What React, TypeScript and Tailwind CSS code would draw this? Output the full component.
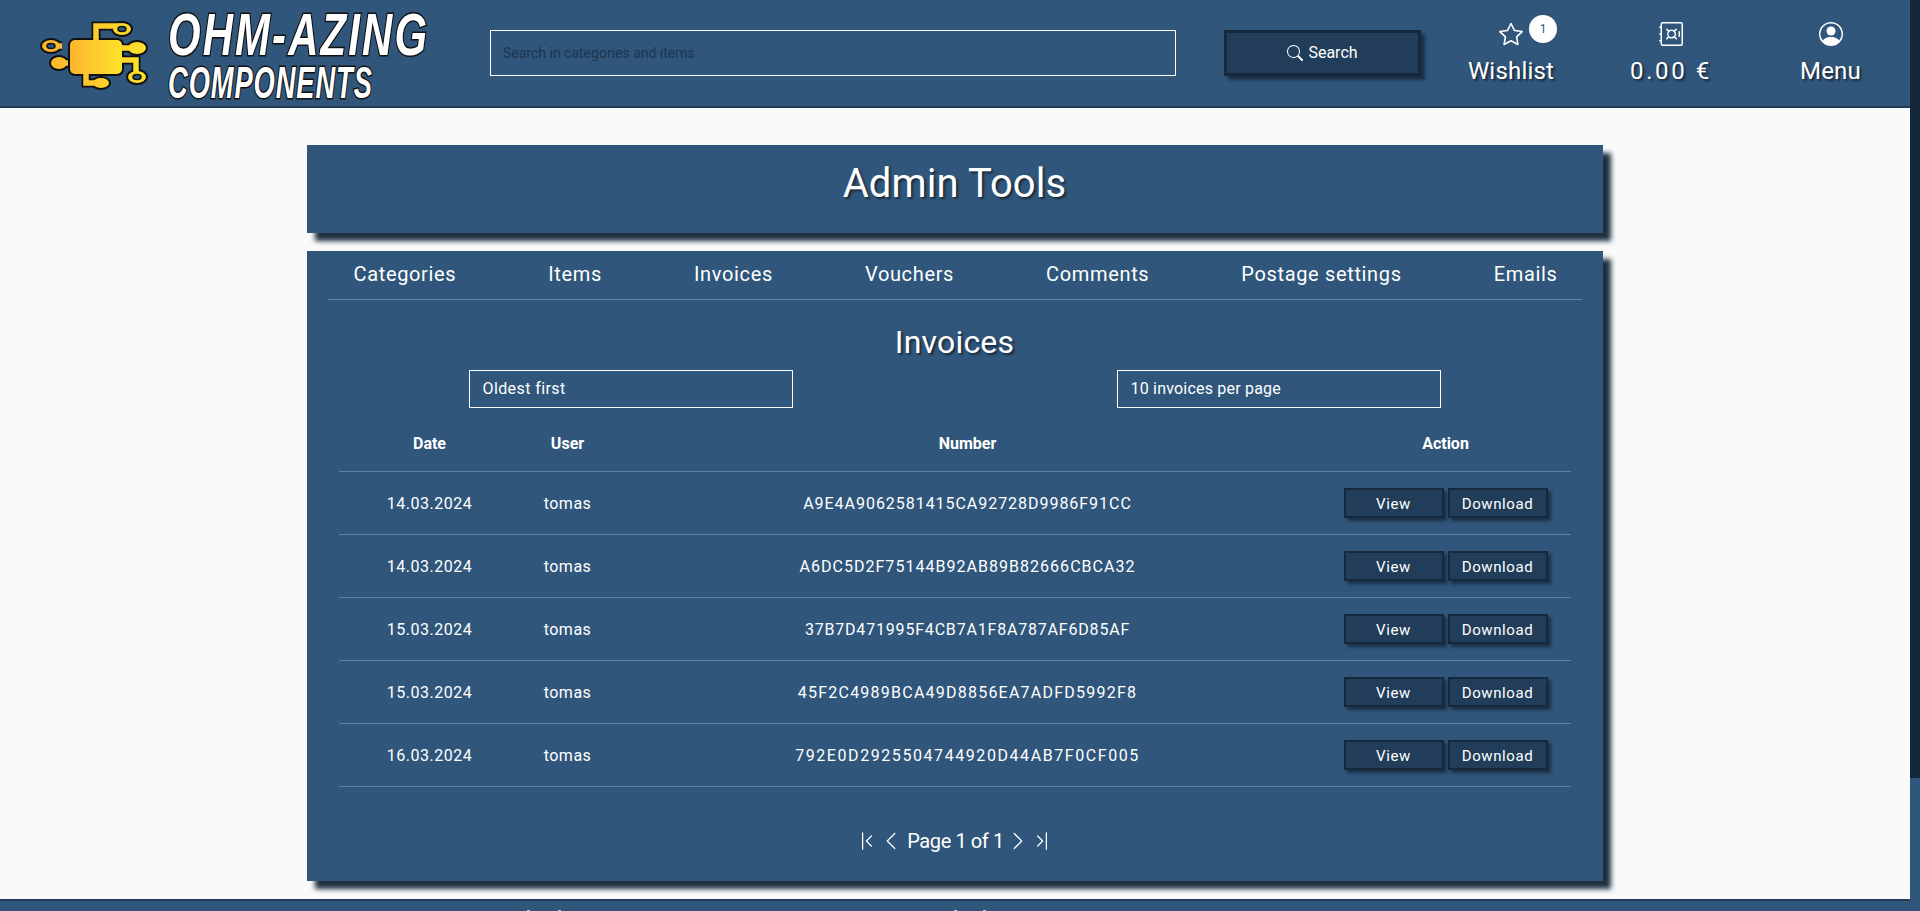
import React from "react";
import { BsSearch, BsStar, BsSafe, BsPersonCircle, BsChevronBarLeft, BsChevronLeft, BsChevronRight, BsChevronBarRight } from "react-icons/bs";

const ts = "[text-shadow:2px_2px_2px_#1b2b3c]";

function Chip() {
  const traces = "M26 26H12 M32 43H22 M60 20V6H84 M50 54V63H64 M80 28H98 M80 40H100V56";
  return (
    <svg width="120" height="80" viewBox="0 0 120 80" className="shrink-0 mt-[14px]">
      <defs>
        <linearGradient id="g" x1="0" x2="1" y1="0" y2="0">
          <stop offset="0" stopColor="#fdb52e" />
          <stop offset="1" stopColor="#fde22b" />
        </linearGradient>
        <linearGradient id="g2" gradientUnits="userSpaceOnUse" x1="10" x2="110" y1="0" y2="0">
          <stop offset="0" stopColor="#fdb52e" />
          <stop offset="1" stopColor="#fde22b" />
        </linearGradient>
      </defs>
      <g fill="#111" stroke="#111">
        <path d={traces} fill="none" strokeWidth="9" />
        <rect x="33" y="19" width="54" height="36" rx="6" strokeWidth="2" />
        <ellipse cx="15" cy="26" rx="11" ry="8" strokeWidth="0" />
        <ellipse cx="23" cy="43" rx="10" ry="8" strokeWidth="0" />
        <ellipse cx="86" cy="9" rx="11" ry="8" strokeWidth="0" />
        <ellipse cx="101" cy="28" rx="11" ry="8" strokeWidth="0" />
        <ellipse cx="101" cy="57" rx="11" ry="8" strokeWidth="0" />
        <ellipse cx="65" cy="63" rx="10" ry="7" strokeWidth="0" />
      </g>
      <g fill="url(#g2)" stroke="url(#g2)">
        <path d={traces} fill="none" strokeWidth="5.5" />
        <rect x="34" y="20" width="52" height="34" rx="5" strokeWidth="0" fill="url(#g)" />
        <ellipse cx="15" cy="26" rx="9" ry="6" strokeWidth="0" />
        <ellipse cx="23" cy="43" rx="8" ry="6" strokeWidth="0" />
        <ellipse cx="86" cy="9" rx="9" ry="6" strokeWidth="0" />
        <ellipse cx="101" cy="28" rx="9" ry="6" strokeWidth="0" />
        <ellipse cx="101" cy="57" rx="9" ry="6" strokeWidth="0" />
        <ellipse cx="65" cy="63" rx="8" ry="5" strokeWidth="0" />
      </g>
      <g fill="#30567b" stroke="#111" strokeWidth="1.5">
        <ellipse cx="15" cy="26" rx="4" ry="2.5" />
        <ellipse cx="86" cy="9" rx="4" ry="2.5" />
        <ellipse cx="101" cy="57" rx="4" ry="2.5" />
      </g>
    </svg>
  );
}

function Logo() {
  const cls = "block origin-left font-['Liberation_Sans',sans-serif] font-bold italic text-white [paint-order:stroke_fill] [-webkit-text-stroke:3px_#111] whitespace-nowrap";
  return (
    <div className="w-[490px] shrink-0 flex items-center pl-[36px]">
      <Chip />
      <div className="w-[270px] flex flex-col ml-[12px] overflow-visible pt-[3px]">
        <span className={`${cls} text-[59px] leading-[52px] tracking-[3px] scale-x-[0.71]`}>OHM-AZING</span>
        <span className={`${cls} text-[44px] leading-[34px] tracking-[1.5px] scale-x-[0.62] mt-[5px]`}>COMPONENTS</span>
      </div>
    </div>
  );
}

function HeaderItem({ icon, label, badge, w = "w-[160px]", track = "tracking-[0.2px]" }: { icon: React.ReactNode; label: string; badge?: boolean; w?: string; track?: string }) {
  return (
    <div className={`${w} shrink-0 flex flex-col items-center relative text-white`}>
      <div className={`h-[24px] flex items-center ${ts}`}>{icon}</div>
      <div className={`text-[24px] leading-[28px] mt-[11px] ${track} ${ts}`}>{label}</div>
      {badge && (
        <span className="absolute left-[98px] top-[-7px] w-[28px] h-[28px] rounded-full bg-white text-[#30567b] text-[12px] flex items-center justify-center">1</span>
      )}
    </div>
  );
}

function Btn({ children }: { children: React.ReactNode }) {
  return (
    <button className="w-[100px] h-[30px] bg-[#213d59] border-[2px] border-[#16283c] text-white text-[15px] leading-none tracking-[0.6px] pt-[2px] flex items-center justify-center shadow-[3px_3px_3px_#1c3046]">
      {children}
    </button>
  );
}

const rows = [
  ["14.03.2024", "A9E4A9062581415CA92728D9986F91CC", "tracking-[0.96px]"],
  ["14.03.2024", "A6DC5D2F75144B92AB89B82666CBCA32", "tracking-[1.03px]"],
  ["15.03.2024", "37B7D471995F4CB7A1F8A787AF6D85AF", "tracking-[0.81px]"],
  ["15.03.2024", "45F2C4989BCA49D8856EA7ADFD5992F8", "tracking-[1.23px]"],
  ["16.03.2024", "792E0D2925504744920D44AB7F0CF005", "tracking-[1.57px]"],
];

const grid = "grid grid-cols-[182px_94px_706px_250px] items-center text-center";
const navItems = ["Categories", "Items", "Invoices", "Vouchers", "Comments", "Postage settings", "Emails"];

export default function App() {
  return (
    <div className="flex h-[911px] w-[1920px] overflow-hidden font-['Roboto',sans-serif] text-white">
      <div className="w-[1910px] shrink-0 flex flex-col">
        <header className="h-[108px] shrink-0 bg-[#30567b] border-b-2 border-[#1f3a55] flex items-center">
          <Logo />
          <div className="w-[686px] h-[46px] shrink-0 border border-white flex items-center pl-[12px] text-[#1d3550] text-[14px]">
            Search in categories and items
          </div>
          <button className="ml-[48px] w-[197px] h-[46px] shrink-0 bg-[#213d59] border-[3px] border-[#16283c] shadow-[4px_4px_3px_#1c3046] flex items-center justify-center gap-[5px] text-white text-[16px]">
            <BsSearch size={16} />
            Search
          </button>
          <div className="ml-[10px] flex">
            <HeaderItem icon={<BsStar size={24} />} label="Wishlist" badge />
            <HeaderItem icon={<BsSafe size={24} />} label="0.00 €" track="tracking-[2.6px]" />
            <HeaderItem icon={<BsPersonCircle size={24} />} label="Menu" w="w-[159px]" />
          </div>
        </header>

        <main className="flex-1 bg-[#fafafa] pt-[37px] flex flex-col items-center pr-[1px]">
          <section className="w-[1296px] h-[88px] bg-[#30567b] shadow-[8px_8px_5px_#1e2f40] pt-[17px] text-center">
            <h1 className={`text-[40px] leading-[44px] tracking-[0.1px] ${ts}`}>Admin Tools</h1>
          </section>

          <section className="w-[1296px] h-[630px] mt-[18px] bg-[#30567b] shadow-[8px_8px_5px_#1e2f40] px-[21px] flex flex-col">
            <nav className="h-[49px] shrink-0 border-b border-white/25 flex items-center justify-between pl-[26px] pr-[24px] pb-[2px] text-[20px] tracking-[0.65px]">
              {navItems.map((n) => (
                <span key={n}>{n}</span>
              ))}
            </nav>
            <h2 className={`mt-[20px] h-[44px] text-center text-[32px] leading-[44px] tracking-[0.2px] ${ts}`}>Invoices</h2>
            <div className="mt-[6px] flex justify-between px-[141px]">
              <div className="w-[324px] h-[38px] border border-white flex items-center pl-[13px] text-[16px] tracking-[0.4px]">Oldest first</div>
              <div className="w-[324px] h-[38px] border border-white flex items-center pl-[13px] text-[16px] tracking-[0.2px]">10 invoices per page</div>
            </div>
            <div className="px-[11px] mt-[6px]">
              <div className={`${grid} h-[58px] border-b border-white/25 font-bold text-[16px] pt-[2px]`}>
                <span>Date</span>
                <span>User</span>
                <span>Number</span>
                <span>Action</span>
              </div>
              {rows.map(([d, n, t]) => (
                <div key={n} className={`${grid} h-[63px] border-b border-white/25 text-[16px] tracking-[0.5px]`}>
                  <span className="pt-[1px]">{d}</span>
                  <span className="pt-[1px]">tomas</span>
                  <span className={`pt-[1px] ${t}`}>{n}</span>
                  <div className="flex justify-center gap-[4px]">
                    <Btn>View</Btn>
                    <Btn>Download</Btn>
                  </div>
                </div>
              ))}
            </div>
            <div className="flex-1 pt-[13px] flex items-center justify-center gap-[4px] text-[20px] tracking-[-0.4px]">
              <BsChevronBarLeft size={20} />
              <BsChevronLeft size={20} />
              <span className="ml-[2px]">Page 1 of 1</span>
              <BsChevronRight size={20} />
              <BsChevronBarRight size={20} />
            </div>
          </section>
        </main>

        <footer className="h-[12px] shrink-0 bg-[#30567b] border-t-2 border-[#213d59] flex items-end">
          <span className="ml-[527px] w-[3px] h-[1px] bg-white/70" />
          <span className="ml-[28px] w-[3px] h-[1px] bg-white/70" />
          <span className="ml-[393px] w-[3px] h-[1px] bg-white/70" />
          <span className="ml-[26px] w-[3px] h-[1px] bg-white/70" />
        </footer>
      </div>
      <div className="w-[10px] shrink-0 bg-[#30567b] flex flex-col">
        <div className="h-[778px] bg-[#15273a]" />
      </div>
    </div>
  );
}
